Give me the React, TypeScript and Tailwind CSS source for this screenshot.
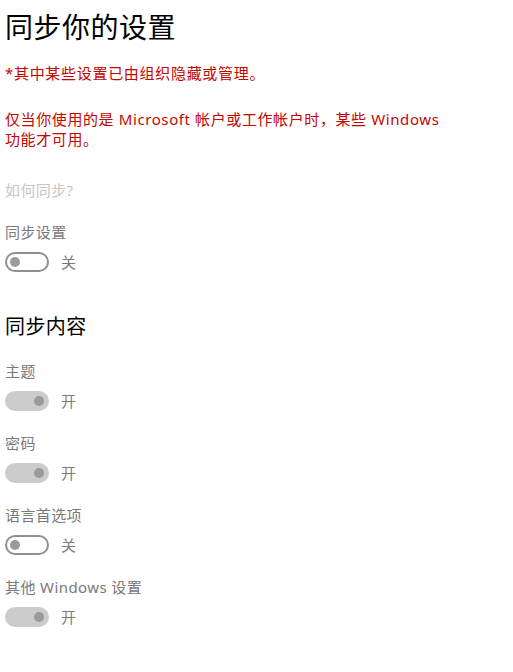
import React from "react";

const font = { fontFamily: '"Noto Sans", "Noto Sans CJK SC", sans-serif' };

const Toggle = ({ on, label }: { on: boolean; label: string }) => (
  <div className="mt-[10px] flex items-center h-5">
    {on ? (
      <div className="w-[44px] h-5 rounded-full bg-[#cccccc] flex items-center justify-end pr-[5px]">
        <div className="w-[10px] h-[10px] rounded-full bg-[#9a9a9a]" />
      </div>
    ) : (
      <div className="w-[44px] h-5 rounded-full border-2 border-[#8f8f8f] flex items-center pl-[3px]">
        <div className="w-[10px] h-[10px] rounded-full bg-[#9a9a9a]" />
      </div>
    )}
    <span className="ml-[12px] text-[15px] leading-5 text-[#7a7a7a]">{label}</span>
  </div>
);

const Setting = ({ title, on, first }: { title: string; on: boolean; first?: boolean }) => (
  <div className={first ? "mt-5" : "mt-[22px]"}>
    <div className="text-[15px] leading-5 tracking-[0.4px] text-[#7a7a7a]">{title}</div>
    <Toggle on={on} label={on ? "开" : "关"} />
  </div>
);

export default function App() {
  return (
    <div className="min-h-screen bg-white pl-[5px] pt-[9px]" style={font}>
      <h1 className="text-[28px] leading-[36px] tracking-[0.5px] text-black font-normal">同步你的设置</h1>
      <p className="mt-[18px] text-[15px] leading-5 tracking-[0.7px] text-[#c50500]">*其中某些设置已由组织隐藏或管理。</p>
      <p className="mt-[26px] w-[445px] text-[15px] leading-5 tracking-[0.6px] text-[#c50500]">
        仅当你使用的是 Microsoft 帐户或工作帐户时，某些 Windows 功能才可用。
      </p>
      <p className="mt-[31px] text-[15px] leading-5 tracking-[0.4px] text-[#c6c6c6]">如何同步?</p>
      <div className="mt-[22px]">
        <div className="text-[15px] leading-5 tracking-[0.4px] text-[#7a7a7a]">同步设置</div>
        <Toggle on={false} label="关" />
      </div>
      <h2 className="mt-[41px] text-[20px] leading-[28px] tracking-[0.4px] text-black font-normal">同步内容</h2>
      <Setting title="主题" on first />
      <Setting title="密码" on />
      <Setting title="语言首选项" on={false} />
      <Setting title="其他 Windows 设置" on />
    </div>
  );
}
